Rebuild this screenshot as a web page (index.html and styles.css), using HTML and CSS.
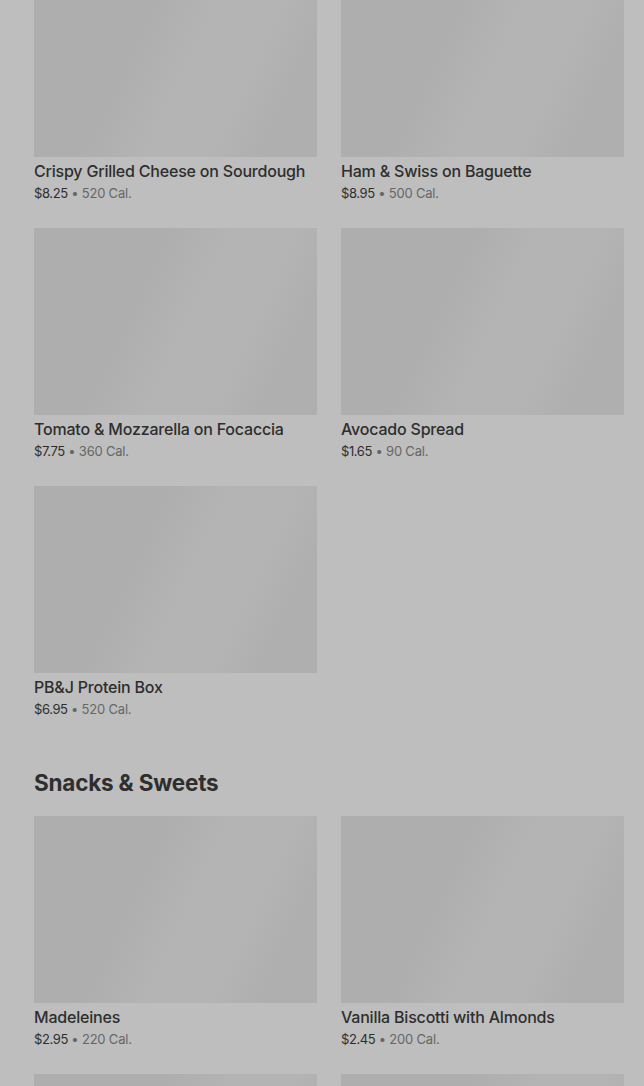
FILE: index.html
```html
<!DOCTYPE html>
<html lang="en">
<head>
<meta charset="UTF-8">
<meta name="viewport" content="width=device-width, initial-scale=1.0">
<title>Menu</title>
<link rel="stylesheet" href="styles.css">
</head>
<body>
<div class="menu">
<section class="menu-section">
<div class="item-grid">
<div class="item">
<div class="item-image"></div>
<div class="item-name">Crispy Grilled Cheese on Sourdough</div>
<div class="item-meta"><span class="price">$8.25</span> • 520 Cal.</div>
</div>
<div class="item">
<div class="item-image"></div>
<div class="item-name">Ham &amp; Swiss on Baguette</div>
<div class="item-meta"><span class="price">$8.95</span> • 500 Cal.</div>
</div>
<div class="item">
<div class="item-image"></div>
<div class="item-name">Tomato &amp; Mozzarella on Focaccia</div>
<div class="item-meta"><span class="price">$7.75</span> • 360 Cal.</div>
</div>
<div class="item">
<div class="item-image"></div>
<div class="item-name">Avocado Spread</div>
<div class="item-meta"><span class="price">$1.65</span> • 90 Cal.</div>
</div>
<div class="item">
<div class="item-image"></div>
<div class="item-name">PB&amp;J Protein Box</div>
<div class="item-meta"><span class="price">$6.95</span> • 520 Cal.</div>
</div>
</div>
</section>
<section class="menu-section">
<h2>Snacks &amp; Sweets</h2>
<div class="item-grid">
<div class="item">
<div class="item-image"></div>
<div class="item-name">Madeleines</div>
<div class="item-meta"><span class="price">$2.95</span> • 220 Cal.</div>
</div>
<div class="item">
<div class="item-image"></div>
<div class="item-name">Vanilla Biscotti with Almonds</div>
<div class="item-meta"><span class="price">$2.45</span> • 200 Cal.</div>
</div>
<div class="item">
<div class="item-image"></div>
</div>
<div class="item">
<div class="item-image"></div>
</div>
</div>
</section>
</div>
</body>
</html>
```

FILE: styles.css
```css
html, body {
margin: 0;
padding: 0;
height: 100%;
overflow: hidden;
}
body {
font-family: 'Inter', 'Liberation Sans', sans-serif;
background-color: #bebebe;
color: #2e2e2e;
}
.menu {
margin-top: -30px;
padding: 0 20px 0 34px;
}
.menu-section {
margin-bottom: 51px;
}
.menu-section h2 {
margin: 0 0 19px;
font-size: 22.5px;
line-height: 28px;
font-weight: 700;
letter-spacing: -0.2px;
color: #2e2e2e;
}
.item-grid {
display: grid;
grid-template-columns: 283px 283px;
column-gap: 24px;
row-gap: 26px;
}
.item-image {
height: 187px;
background-color: #aeaeae;
background-image: linear-gradient(115deg, #aeaeae 35%, #b4b4b4 55%, #b4b4b4 70%, #afafaf 85%);
}
.item-name {
margin-top: 4px;
font-size: 16px;
line-height: 20px;
font-weight: 500;
letter-spacing: -0.2px;
color: #2e2e2e;
white-space: nowrap;
}
.item-meta {
margin-top: 4px;
font-size: 13px;
line-height: 17px;
letter-spacing: -0.2px;
color: #666666;
}
.price {
color: #2e2e2e;
letter-spacing: -0.4px;
}
```
